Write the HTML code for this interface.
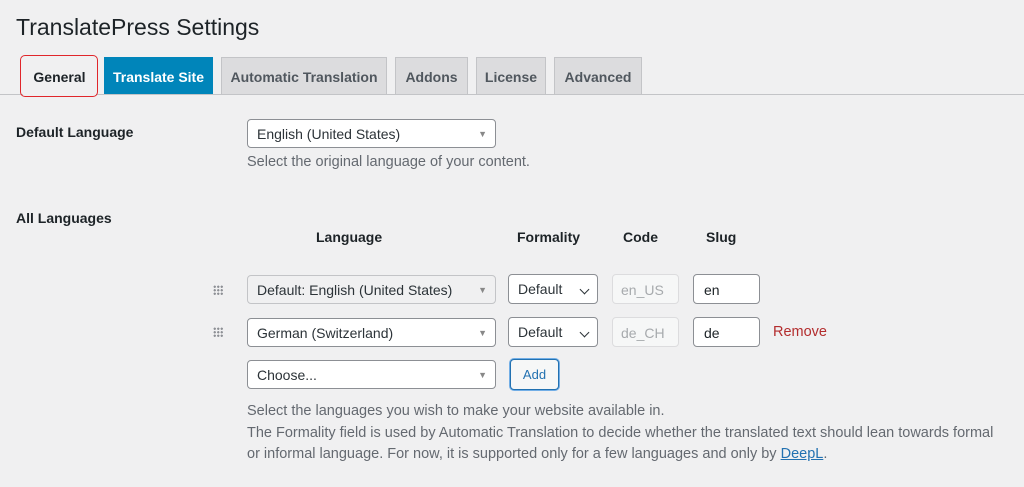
<!DOCTYPE html><html><head><style>
body{margin:0;width:1024px;height:487px;background:#f0f0f1;font-family:"Liberation Sans",sans-serif;color:#1d2327;position:relative;overflow:hidden;font-size:14px}
.a{position:absolute;white-space:nowrap}
.tab{position:absolute;top:57px;height:37px;line-height:38px;text-align:center;background:#dcdcde;border:1px solid #c3c4c7;border-bottom:none;font-weight:bold;color:#50575e;font-size:14px;box-sizing:border-box}
.sel{position:absolute;height:29px;background:#fff;border:1px solid #8c8f94;border-radius:4px;box-sizing:border-box;line-height:29px;padding-left:9px;font-size:14px;color:#2c3338}
.sel .ar{position:absolute;right:8px;top:0;font-size:9px;color:#888}
.inp{position:absolute;height:30px;border:1px solid #8c8f94;border-radius:4px;background:#fff;box-sizing:border-box;line-height:30px;padding-left:10px;font-size:14px}
.dis{border-color:#dcdcde;background:#f6f7f7;color:#a7aaad;padding-left:8px}
.grip{position:absolute;width:10px;height:10px;background-image:radial-gradient(circle,#8c8f94 1px,transparent 1.3px);background-size:3.5px 3.5px}
.h{font-weight:bold;font-size:14px}
.d{color:#646970;font-size:14.5px}
.chev{position:absolute;right:9px;top:11px;width:6px;height:6px;border-right:1.6px solid #2c3338;border-bottom:1.6px solid #2c3338;transform:rotate(45deg)}
</style></head><body>
<div class="a" style="left:16px;top:14px;font-size:23px;color:#1d2327">TranslatePress Settings</div>
<div class="a" style="left:0;top:94px;width:1024px;height:1px;background:#c3c4c7"></div>
<div class="tab" style="left:23px;width:73px;background:#f0f0f1;color:#1d2327;border-color:#f0f0f1;height:38px">General</div>
<div class="a" style="left:20px;top:55px;width:76px;height:40px;border:1.5px solid #e0262b;border-radius:5px"></div>
<div class="tab" style="left:104px;width:109px;background:#0085ba;border-color:#0085ba;color:#fff">Translate Site</div>
<div class="tab" style="left:221px;width:166px">Automatic Translation</div>
<div class="tab" style="left:395px;width:73px">Addons</div>
<div class="tab" style="left:476px;width:70px">License</div>
<div class="tab" style="left:554px;width:88px">Advanced</div>
<div class="a h" style="left:16px;top:124px">Default Language</div>
<div class="sel" style="left:247px;top:119px;width:249px">English (United States)<span class="ar">▼</span></div>
<div class="a d" style="left:247px;top:154px">Select the original language of your content.</div>
<div class="a h" style="left:16px;top:210px">All Languages</div>
<div class="a h" style="left:316px;top:229px">Language</div>
<div class="a h" style="left:517px;top:229px">Formality</div>
<div class="a h" style="left:623px;top:229px">Code</div>
<div class="a h" style="left:706px;top:229px">Slug</div>
<div class="grip" style="left:213px;top:285px"></div>
<div class="sel" style="left:247px;top:275px;width:249px;background:#f0f0f1;border-color:#c3c4c7">Default: English (United States)<span class="ar">▼</span></div>
<div class="sel" style="left:508px;top:274px;width:90px;height:30px">Default<span class="chev"></span></div>
<div class="inp dis" style="left:612px;top:274px;width:67px">en_US</div>
<div class="inp" style="left:693px;top:274px;width:67px">en</div>
<div class="grip" style="left:213px;top:327px"></div>
<div class="sel" style="left:247px;top:318px;width:249px">German (Switzerland)<span class="ar">▼</span></div>
<div class="sel" style="left:508px;top:317px;width:90px;height:30px">Default<span class="chev"></span></div>
<div class="inp dis" style="left:612px;top:317px;width:67px">de_CH</div>
<div class="inp" style="left:693px;top:317px;width:67px">de</div>
<div class="a" style="left:773px;top:324px;color:#b32d2e;font-size:14.5px">Remove</div>
<div class="sel" style="left:247px;top:360px;width:249px">Choose...<span class="ar">▼</span></div>
<div class="a" style="left:510px;top:359px;width:49px;height:31px;border:1.5px solid #2271b1;border-radius:4px;box-sizing:border-box;background:#f6f7f7;text-align:center;line-height:29px;font-size:13px;color:#2271b1;box-shadow:0 0 0 1px #72aee6">Add</div>
<div class="a d" style="left:247px;top:403px">Select the languages you wish to make your website available in.</div>
<div class="a d" style="left:247px;top:425px">The Formality field is used by Automatic Translation to decide whether the translated text should lean towards formal</div>
<div class="a d" style="left:247px;top:446px">or informal language. For now, it is supported only for a few languages and only by <span style="color:#2271b1;text-decoration:underline">DeepL</span>.</div>
</body></html>
